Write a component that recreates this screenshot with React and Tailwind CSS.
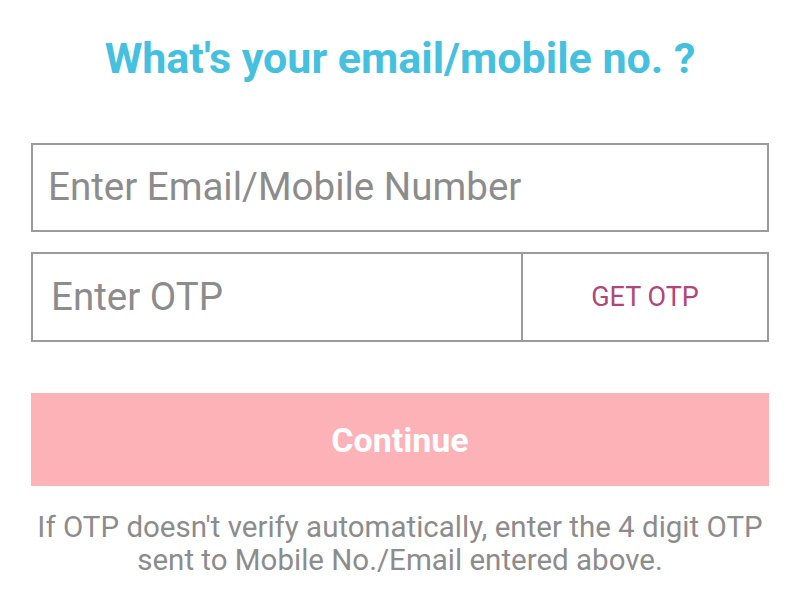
export default function App() {
  return (
    <div
      className="w-[800px] h-[599px] bg-white flex flex-col px-[31px]"
      style={{ fontFamily: "Roboto, 'Liberation Sans', sans-serif" }}
    >
      <h1 className="mt-[32px] h-[52px] flex items-center justify-center text-[43px] font-bold text-[#45c1df] leading-none">
        What's your email/mobile no. ?
      </h1>

      <div className="mt-[59px] h-[89px] border-2 border-[#9b9b9b] flex items-center pl-[15px]">
        <span className="text-[38.5px] text-[#8c8c8c] leading-none">Enter Email/Mobile Number</span>
      </div>

      <div className="mt-[20px] h-[90px] border-2 border-[#9b9b9b] flex">
        <div className="flex-1 flex items-center pl-[18px]">
          <span className="text-[38.5px] text-[#8c8c8c] leading-none">Enter OTP</span>
        </div>
        <div className="w-[246px] border-l-2 border-[#9b9b9b] flex items-center justify-center">
          <span className="text-[27px] text-[#b2457a] leading-none">GET OTP</span>
        </div>
      </div>

      <div className="mt-[51px] h-[93px] bg-[#fdb2b8] flex items-center justify-center">
        <span className="text-[34px] font-bold text-white leading-none">Continue</span>
      </div>

      <p className="mt-[25px] text-center text-[29.5px] leading-[33px] text-[#8c8c8c] whitespace-nowrap">
        If OTP doesn't verify automatically, enter the 4 digit OTP
        <br />
        sent to Mobile No./Email entered above.
      </p>
    </div>
  );
}
